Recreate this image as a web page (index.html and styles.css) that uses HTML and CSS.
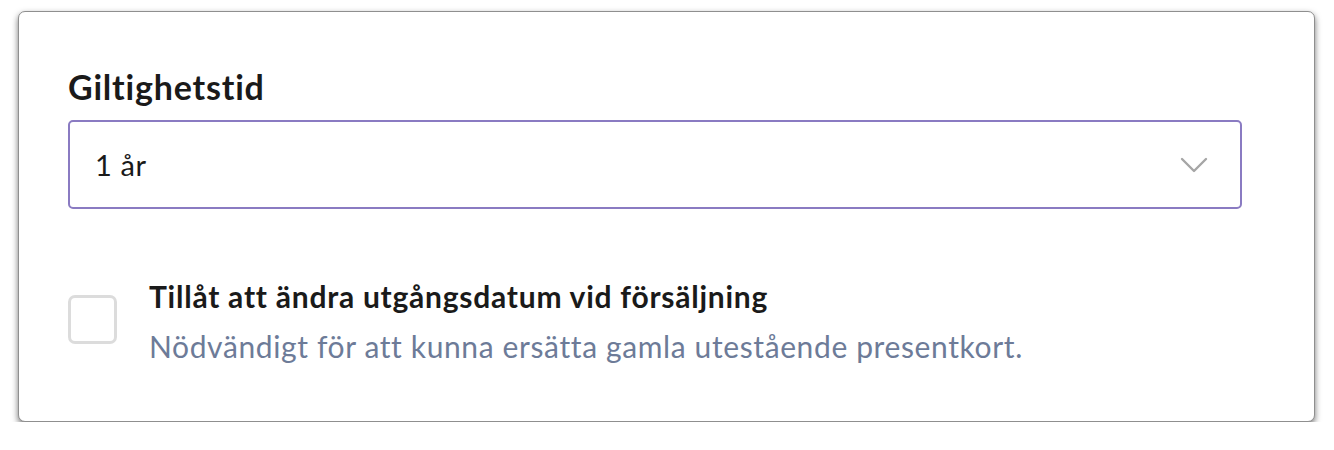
FILE: index.html
```
<!DOCTYPE html>
<html lang="sv">
<head>
<meta charset="utf-8">
<link rel="stylesheet" href="styles.css">
</head>
<body>
<div class="card">
  <label class="field-label" for="validity">Giltighetstid</label>
  <div class="select">
    <span class="select-value">1 år</span>
    <svg class="chevron" width="28" height="16" viewBox="0 0 28 16" aria-hidden="true">
      <path d="M2 2 L14 14 L26 2" fill="none" stroke="#a6a6a6" stroke-width="2.4" stroke-linecap="round" stroke-linejoin="round"/>
    </svg>
  </div>
  <div class="check-row">
    <span class="checkbox"></span>
    <div class="check-text">
      <div class="check-title">Tillåt att ändra utgångsdatum vid försäljning</div>
      <div class="check-desc">Nödvändigt för att kunna ersätta gamla utestående presentkort.</div>
    </div>
  </div>
</div>
</body>
</html>
```
FILE: styles.css
```
html, body {
  margin: 0;
  padding: 0;
  background: #ffffff;
}
body {
  padding: 11px 19px 0 18px;
  font-family: Lato, "Open Sans", sans-serif;
}
.card {
  box-sizing: border-box;
  width: 1297px;
  height: 411px;
  border: 1px solid #8f8f8f;
  border-radius: 7px;
  background: #fff;
  box-shadow: 0 3px 6px rgba(0,0,0,0.55);
  padding: 55px 49px 0 49px;
}
.field-label {
  display: block;
  font-size: 34px;
  font-weight: 700;
  color: #1a1a1a;
  line-height: 40px;
  letter-spacing: 0.8px;
  margin-bottom: 13px;
}
.select {
  box-sizing: border-box;
  width: 1174px;
  height: 89px;
  border: 2px solid #8a7bc2;
  border-radius: 5px;
  display: flex;
  align-items: center;
  justify-content: space-between;
  padding: 0 32px 0 25px;
}
.select-value {
  font-size: 29px;
  color: #1a1a1a;
  letter-spacing: 0.6px;
}
.chevron {
  display: block;
}
.check-row {
  display: flex;
  align-items: flex-start;
  margin-top: 70px;
}
.checkbox {
  box-sizing: border-box;
  width: 49px;
  height: 49px;
  border: 3px solid #dcdcdc;
  border-radius: 7px;
  margin-top: 16px;
  flex: none;
}
.check-text {
  margin-left: 32px;
}
.check-title {
  font-size: 30px;
  font-weight: 700;
  color: #1a1a1a;
  line-height: 34px;
  letter-spacing: 0.75px;
}
.check-desc {
  font-size: 30px;
  color: #6d7b98;
  line-height: 34px;
  letter-spacing: 0.62px;
  margin-top: 16px;
}
```
